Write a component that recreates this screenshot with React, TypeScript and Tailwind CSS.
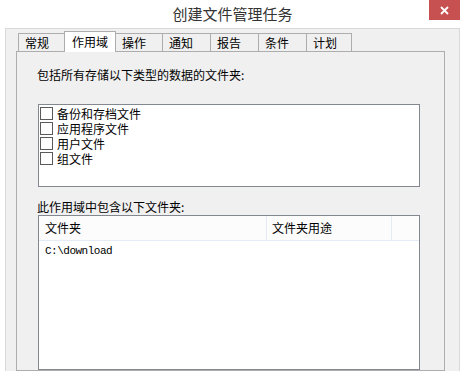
import React from 'react';

const FONT = '"Noto Sans CJK SC", "Noto Sans", sans-serif';

const tabs = [
  { name: '常规', w: 'w-[47px]' },
  { name: '作用域', w: 'w-[52px]', active: true },
  { name: '操作', w: 'w-[48px]' },
  { name: '通知', w: 'w-[49px]' },
  { name: '报告', w: 'w-[49px]' },
  { name: '条件', w: 'w-[49px]' },
  { name: '计划', w: 'w-[46px]' },
];

const dataTypes = ['备份和存档文件', '应用程序文件', '用户文件', '组文件'];

export default function App() {
  return (
    <div
      className="w-[465px] h-[371px] overflow-hidden bg-white text-black flex flex-col"
      style={{ fontFamily: FONT }}
    >
      {/* 标题栏 */}
      <div className="relative h-[28px] shrink-0 flex items-center justify-center">
        <span className="text-[15px] leading-none text-[#333] pb-[1px]">创建文件管理任务</span>
        <div className="absolute top-0 left-[429px] w-[31px] h-[20px] bg-[#c75050] flex items-center justify-center">
          <svg width="9" height="9" viewBox="0 0 9 9">
            <path d="M1 1 L8 8 M8 1 L1 8" stroke="#fff" strokeWidth="1.8" />
          </svg>
        </div>
      </div>

      {/* 窗体 */}
      <div className="ml-[5px] w-[455px] flex-1 border-t border-l border-r border-[#d9d9d9] bg-[#f0f0f0] pl-[10px] pt-[2px] flex flex-col">
        {/* 选项卡 */}
        <div className="flex items-end pl-[2px] h-[20px] text-[12px] leading-none">
          {tabs.map((t) =>
            t.active ? (
              <div
                key={t.name}
                className={`${t.w} h-[21px] -mb-[1px] -ml-[1px] relative z-10 bg-white border border-b-0 border-[#adadad] pl-[7px] flex items-center`}
              >
                {t.name}
              </div>
            ) : (
              <div
                key={t.name}
                className={`${t.w} h-[18px] -ml-[1px] first:ml-0 bg-[#f0f0f0] border border-b-0 border-[#adadad] pl-[6px] pt-[1px] flex items-center`}
              >
                {t.name}
              </div>
            )
          )}
        </div>

        {/* 面板 */}
        <div className="w-[429px] flex-1 border border-[#adadad] bg-[#f0f0f0] flex flex-col">
          <div className="mt-[15px] ml-[20px] text-[12px] leading-[16px]">
            包括所有存储以下类型的数据的文件夹:
          </div>

          <div className="mt-[21px] ml-[21px] w-[382px] h-[83px] shrink-0 border border-[#828790] bg-white pt-[1px] pl-[1px]">
            {dataTypes.map((d) => (
              <div key={d} className="h-[15px] flex items-center gap-[4px] text-[12px] leading-[14px]">
                <span className="w-[13px] h-[13px] border border-[#5a5a5a] bg-white shrink-0" />
                <span>{d}</span>
              </div>
            ))}
          </div>

          <div className="mt-[12px] ml-[20px] text-[12px] leading-[16px]">此作用域中包含以下文件夹:</div>

          <div className="ml-[21px] w-[382px] flex-1 border border-[#828790] bg-white flex flex-col">
            <div className="h-[25px] flex bg-[#fcfcfc] border-b border-[#e3ebf7] text-[12px] leading-none">
              <div className="w-[228px] pl-[6px] flex items-center border-r border-[#e5eaf2]">文件夹</div>
              <div className="w-[125px] pl-[5px] flex items-center border-r border-[#e5eaf2]">文件夹用途</div>
              <div className="flex-1" />
            </div>
            <div
              className="pl-[6px] pt-[3px] text-[11px] tracking-[-0.5px] leading-[14px]"
              style={{ fontFamily: '"Liberation Mono", monospace' }}
            >
              C:\download
            </div>
          </div>
        </div>
      </div>
    </div>
  );
}
